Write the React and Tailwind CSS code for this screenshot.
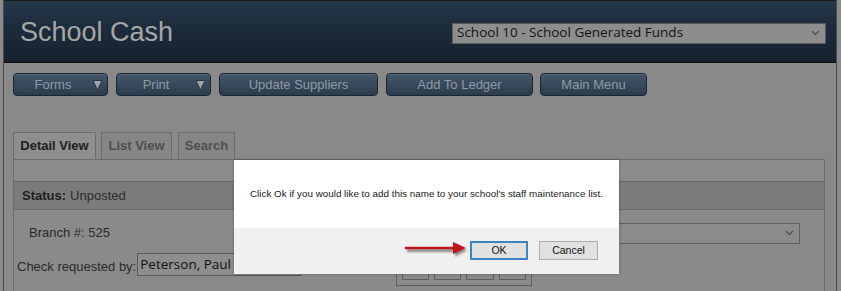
import React from "react";

function NavButton({ label, width, arrow }) {
  return (
    <div
      className={`${width} h-[23px] flex items-center rounded-[4px] border border-[#1c2631] bg-gradient-to-b from-[#435669] to-[#2c3c4d] shadow-[inset_0_1px_0_rgba(150,170,190,0.25)]`}
    >
      <span className="flex-1 text-center text-[13px] text-[#8e9aa5] leading-none">{label}</span>
      {arrow && (
        <svg width="11" height="12" viewBox="0 0 11 12" className="mr-[4px]">
          <polygon points="1,1.5 10,1.5 5.5,11" fill="#9aa3ac" stroke="#2a3440" strokeWidth="1" />
        </svg>
      )}
    </div>
  );
}

function Tab({ label, width, active }) {
  return (
    <div
      className={`${width} h-[27px] flex items-center justify-center border border-[#6c6c6c] border-b-0 text-[13px] font-bold ${
        active ? "bg-[#8e8e8e] text-[#1e1e1e]" : "bg-[#868686] text-[#4e4e4e]"
      }`}
    >
      {label}
    </div>
  );
}

export default function App() {
  return (
    <div
      className="relative w-[841px] h-[291px] overflow-hidden bg-[#8a8a8a]"
      style={{ fontFamily: '"Liberation Sans", Arial, sans-serif' }}
    >
      <div className="ml-[3px] w-[834px] h-full border-l border-r border-[#4c4c4c] bg-[#898989]">
        {/* Header */}
        <div className="h-[63px] flex items-center justify-between pl-[16px] pr-[10px] border-t border-[#1a1a1a] border-b border-b-[#0c0c0c] bg-gradient-to-b from-[#243649] via-[#1c2b3b] to-[#16212d]">
          <div className="text-[27px] text-[#a6a6a6] leading-none mt-[2px]">School Cash</div>
          <div
            className="w-[374px] h-[21px] flex items-center justify-between bg-[#8d8d8d] border border-[#5c5c5c] pl-[4px] pr-[5px] mt-[3px]"
            style={{ fontFamily: '"Open Sans", sans-serif' }}
          >
            <span className="text-[13.5px] text-[#141414] leading-none">School 10 - School Generated Funds</span>
            <svg width="9" height="6" viewBox="0 0 9 6">
              <polyline points="1,1 4.5,4.5 8,1" fill="none" stroke="#4a4a4a" strokeWidth="1.2" />
            </svg>
          </div>
        </div>

        {/* Nav buttons */}
        <div className="flex pl-[9px] mt-[10px]">
          <NavButton label="Forms" width="w-[95px]" arrow />
          <div className="w-[8px]" />
          <NavButton label="Print" width="w-[95px]" arrow />
          <div className="w-[8px]" />
          <NavButton label="Update Suppliers" width="w-[159px]" />
          <div className="w-[8px]" />
          <NavButton label="Add To Ledger" width="w-[147px]" />
          <div className="w-[7px]" />
          <NavButton label="Main Menu" width="w-[107px]" />
        </div>

        {/* Tabs */}
        <div className="flex items-end pl-[9px] mt-[36px]">
          <Tab label="Detail View" width="w-[83px]" active />
          <div className="w-[5px]" />
          <Tab label="List View" width="w-[71px]" />
          <div className="w-[6px]" />
          <Tab label="Search" width="w-[57px]" />
        </div>

        {/* Panel */}
        <div className="ml-[9px] w-[812px] border border-[#6c6c6c] bg-[#8a8a8a] h-[140px]">
          <div className="h-[21px] bg-[#8c8c8c]" />
          <div className="h-[29px] flex items-center bg-[#7b7b7b] border-t border-b border-[#676767] pl-[8px] text-[13px]">
            <span className="font-bold text-[#1f1f1f]">Status:</span>
            <span className="ml-[4px] text-[#2c2c2c]">Unposted</span>
          </div>
          <div className="flex items-center justify-between mt-[12px] h-[22px]">
            <span className="ml-[15px] text-[13px] text-[#2a2a2a]">Branch #: 525</span>
            <div className="mr-[24px] w-[330px] h-[21px] flex items-center justify-end bg-[#8b8b8b] border border-[#606060] pr-[5px]">
              <svg width="9" height="6" viewBox="0 0 9 6">
                <polyline points="1,1 4.5,4.5 8,1" fill="none" stroke="#4a4a4a" strokeWidth="1.2" />
              </svg>
            </div>
          </div>
          <div className="flex items-start mt-[9px]">
            <span className="ml-[3px] mt-[4px] text-[13px] text-[#2a2a2a]">Check requested by:</span>
            <div
              className="ml-[1px] w-[164px] h-[23px] flex items-center bg-[#8e8e8e] border border-[#5a5a5a] pl-[2px]"
              style={{ fontFamily: '"Open Sans", sans-serif' }}
            >
              <span className="text-[13.5px] text-[#111111] leading-none">Peterson, Paul</span>
            </div>
            <div className="ml-[95px] mt-[6px] w-[136px] h-[27px] border border-[#5e5e5e] flex gap-[5px] px-[5px]">
              <div className="w-[27px] h-[20px] border border-t-0 border-[#5e5e5e]" />
              <div className="w-[28px] h-[20px] border border-t-0 border-[#5e5e5e]" />
              <div className="w-[28px] h-[20px] border border-t-0 border-[#5e5e5e]" />
              <div className="w-[28px] h-[20px] border border-t-0 border-[#5e5e5e]" />
            </div>
          </div>
        </div>
      </div>

      {/* Dialog */}
      <div className="absolute left-[234px] top-[160px] w-[385px] h-[114px] bg-white shadow-[0_0_3px_rgba(0,0,0,0.3)] flex flex-col">
        <div className="h-[68px] flex items-center pl-[16px]">
          <span className="text-[9.85px] text-[#1a1a1a]">
            Click Ok if you would like to add this name to your school's staff maintenance list.
          </span>
        </div>
        <div className="flex-1 bg-[#f0f0f0] flex items-start justify-end pr-[21px] pt-[13px] gap-[11px]">
          <div className="w-[58px] h-[19px] flex items-center justify-center bg-[#e1e1e1] border-2 border-[#3d84c0] text-[10.5px] text-[#111]">
            OK
          </div>
          <div className="w-[59px] h-[19px] flex items-center justify-center bg-[#e1e1e1] border border-[#adadad] text-[10.5px] text-[#111]">
            Cancel
          </div>
        </div>
      </div>

      {/* Red arrow annotation */}
      <svg className="absolute left-[402px] top-[238px]" width="70" height="22" viewBox="0 0 70 22">
        <defs>
          <filter id="sh" x="-20%" y="-50%" width="140%" height="200%">
            <feGaussianBlur stdDeviation="1.2" />
          </filter>
        </defs>
        <g filter="url(#sh)" opacity="0.55" transform="translate(1,2.5)">
          <line x1="4" y1="10" x2="54" y2="10" stroke="#333" strokeWidth="3" />
          <polygon points="52,4 64,10 52,16" fill="#333" />
        </g>
        <line x1="4" y1="10" x2="54" y2="10" stroke="#c0151b" strokeWidth="2.6" strokeLinecap="round" />
        <polygon points="51,4 64,10 51,16" fill="#c0151b" />
      </svg>
    </div>
  );
}
